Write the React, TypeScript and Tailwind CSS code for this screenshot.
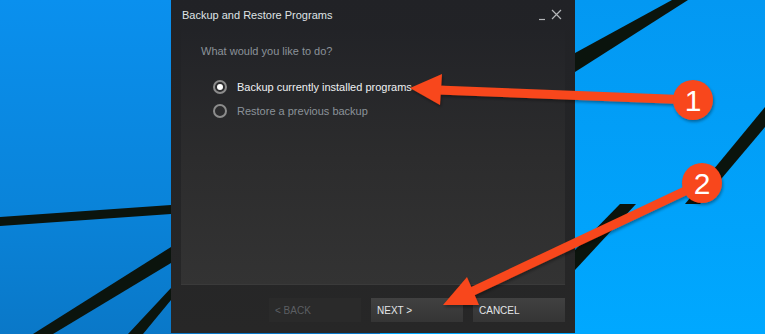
import React from "react";

function Wallpaper() {
  return (
    <svg className="absolute inset-0" width="765" height="334" viewBox="0 0 765 334">
      <defs>
        <linearGradient id="wl" x1="0" y1="0" x2="0" y2="1">
          <stop offset="0" stopColor="#0a90ee" />
          <stop offset="0.6" stopColor="#0a84da" />
          <stop offset="1" stopColor="#0a78c8" />
        </linearGradient>
        <linearGradient id="wr" x1="0" y1="0" x2="0" y2="1">
          <stop offset="0" stopColor="#0398f2" />
          <stop offset="1" stopColor="#00a8ff" />
        </linearGradient>
      </defs>
      <rect x="0" y="0" width="380" height="334" fill="url(#wl)" />
      <rect x="380" y="0" width="385" height="334" fill="url(#wr)" />
      <g fill="#0b140d">
        <polygon points="0,217 171,205 171,214 0,226" />
        <polygon points="171,247 171,263 53,334 33,334" />
        <polygon points="171,288 171,300 143,334 128,334" />
        <polygon points="575,53 672,0 688,0 575,72" />
        <polygon points="765,107 765,127 700,204 685,204" />
        <polygon points="620,204 636,204 575,270 575,250" />
      </g>
    </svg>
  );
}

function Callouts() {
  const orange = "#f8471a";
  return (
    <svg className="pointer-events-none absolute inset-0" width="765" height="334" viewBox="0 0 765 334">
      <defs>
        <filter id="sh" x="-30%" y="-30%" width="160%" height="160%">
          <feDropShadow dx="1" dy="2" stdDeviation="1.5" floodColor="#000" floodOpacity="0.35" />
        </filter>
      </defs>
      <g filter="url(#sh)" fill={orange}>
        <line x1="438" y1="90" x2="693" y2="100" stroke={orange} strokeWidth="9" />
        <polygon points="410,88 442,74 440,105" />
        <line x1="471" y1="292" x2="702" y2="183" stroke={orange} strokeWidth="9" />
        <polygon points="443,305 467,277 479,305" />
        <circle cx="693" cy="100" r="20" />
        <circle cx="702" cy="183" r="20" />
      </g>
      <text
        x="693"
        y="111"
        textAnchor="middle"
        fill="#fff"
        fontSize="30"
        fontFamily="'Liberation Sans', Arial, sans-serif"
      >
        1
      </text>
      <text
        x="702"
        y="194"
        textAnchor="middle"
        fill="#fff"
        fontSize="30"
        fontFamily="'Liberation Sans', Arial, sans-serif"
      >
        2
      </text>
    </svg>
  );
}

function Radio({ checked, label }: { checked: boolean; label: string }) {
  return (
    <div className="flex h-6 items-center">
      <span className="flex h-[14px] w-[14px] items-center justify-center rounded-full border-2 border-[#8c8c8c] bg-[#2c2c2e]">
        {checked && <span className="h-[6px] w-[6px] rounded-full bg-white" />}
      </span>
      <span className={`ml-[10px] ${checked ? "text-[#eef0f2]" : "text-[#8b9299]"}`}>
        {label}
      </span>
    </div>
  );
}

function Button({ label, disabled }: { label: string; disabled?: boolean }) {
  return (
    <div
      className={`flex h-6 w-[92px] items-center pl-[6px] text-[10px] ${
        disabled
          ? "bg-[#2a2a2a] text-[#5c5f63]"
          : "bg-gradient-to-b from-[#414141] to-[#353535] text-[#e4e6e8]"
      }`}
    >
      {label}
    </div>
  );
}

export default function App() {
  return (
    <div className="relative h-[334px] w-[765px] overflow-hidden font-['Liberation_Sans',Arial,sans-serif]">
      <Wallpaper />

      <div className="relative ml-[171px] flex h-[333px] w-[404px] flex-col bg-gradient-to-b from-[#212226] to-[#272727] text-[11px]">
        {/* title bar */}
        <div className="flex h-[30px] items-center justify-between pl-[11px] pr-[12px]">
          <span className="text-[#dfe2e5]">Backup and Restore Programs</span>
          <svg width="24" height="12" viewBox="0 0 24 12" className="text-[#b4b6b8]">
            <line x1="0" y1="10.5" x2="6" y2="10.5" stroke="currentColor" strokeWidth="1.2" />
            <path d="M13 1 L22 10 M22 1 L13 10" stroke="currentColor" strokeWidth="1.2" fill="none" />
          </svg>
        </div>

        {/* content panel */}
        <div className="mx-[10px] flex h-[255px] flex-col bg-gradient-to-b from-[#222327] via-[#2c2c2d] to-[#333333] px-[20px] pt-[14px] shadow-[inset_0_-1px_0_#3a3a3a]">
          <div className="leading-[14px] text-[#8b9299]">What would you like to do?</div>
          <div className="mt-[17px] flex flex-col pl-[12px]">
            <Radio checked label="Backup currently installed programs" />
            <Radio checked={false} label="Restore a previous backup" />
          </div>
        </div>

        {/* footer */}
        <div className="flex flex-1 items-start justify-end gap-[10px] pr-[10px] pt-[13px]">
          <Button label="< BACK" disabled />
          <Button label="NEXT >" />
          <Button label="CANCEL" />
        </div>
      </div>

      <Callouts />
    </div>
  );
}
